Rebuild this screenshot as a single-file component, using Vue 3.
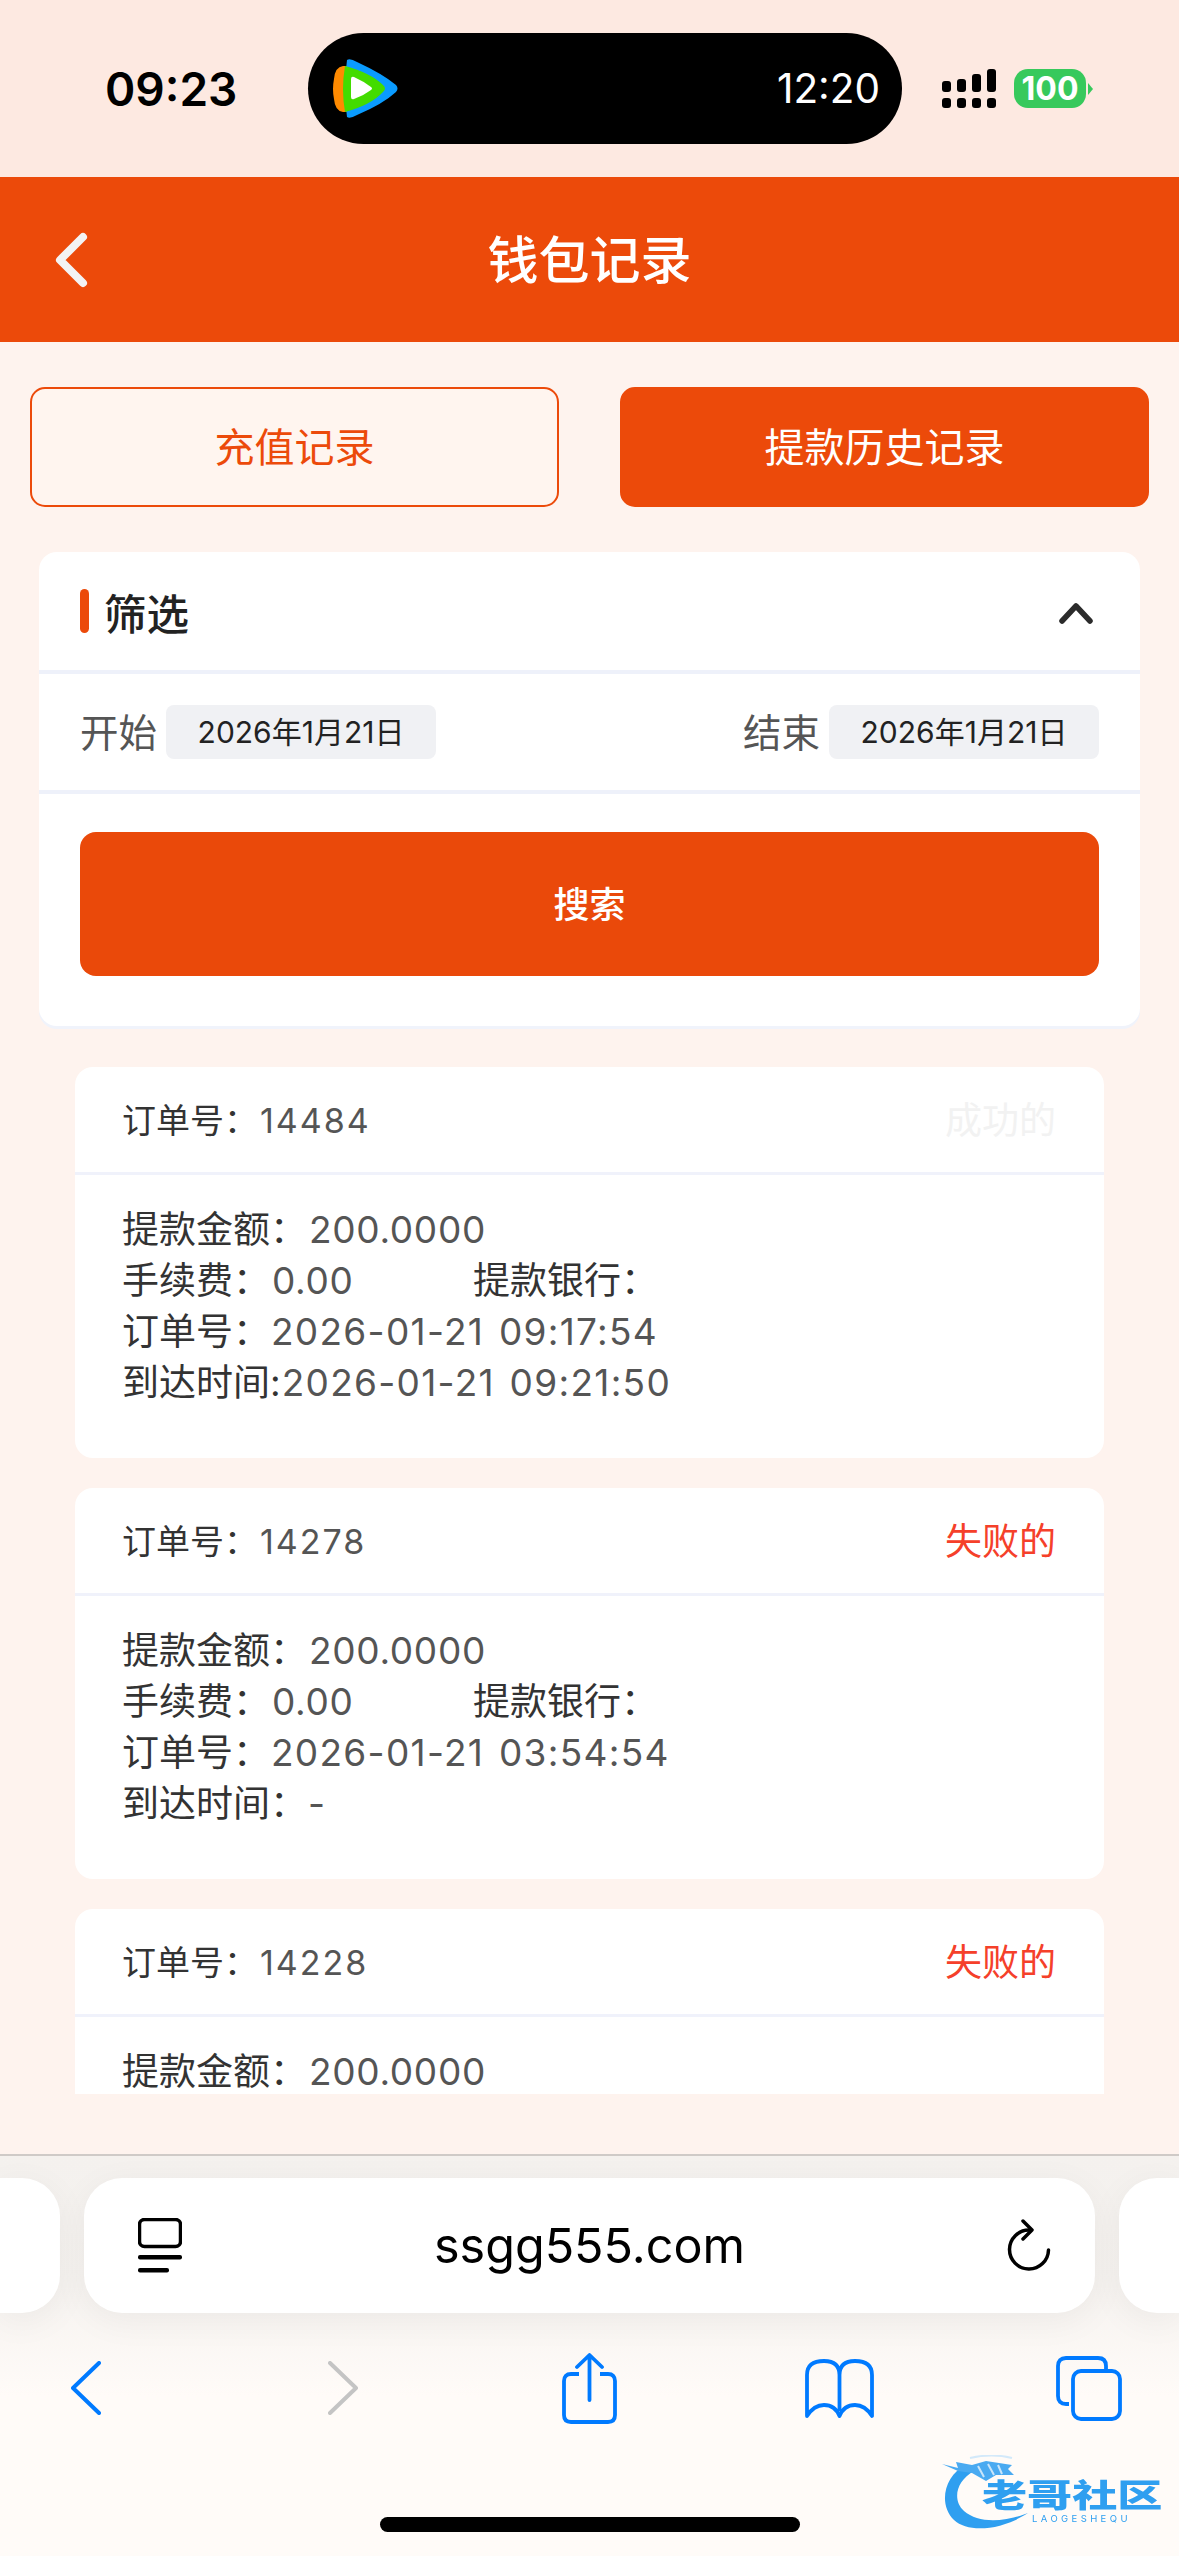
<template>
  <div class="screen">
    <header class="status">
      <span class="clock">09:23</span>
      <div class="island">
        <svg class="tv-logo" width="66" height="60" viewBox="0 0 66 60">
          <path d="M10 7Q2 8 1 20Q-1 30 1 40Q2 52 10 53L20 53L20 7Z" fill="#ff8a00" />
          <path d="M14 1Q17-1 24 3Q50 15 63 26Q66 29.5 63 33Q50 45 24 56Q17 60 14 58Q10 30 14 1Z" fill="#0a9bff" />
          <path d="M12 7Q38 14 50 26Q54 29.5 50 33Q38 46 12 53Q8 30 12 7Z" fill="#43dc00" />
          <path d="M18 20Q18 17 21 18Q30 22 38 28Q40 29.5 38 31Q30 37 21 40Q18 41 18 38Z" fill="#fff" />
        </svg>
        <span class="island-time">12:20</span>
      </div>
      <div class="signal">
        <div v-for="h in signalBars" :key="h" class="signal-col">
          <i :style="{ height: h + 'px' }"></i>
          <i class="dot"></i>
        </div>
      </div>
      <div class="battery">
        <span class="battery-body">100</span>
        <span class="battery-nub"></span>
      </div>
    </header>

    <nav class="topbar">
      <svg class="back" width="36" height="56" viewBox="0 0 36 56">
        <path d="M29 5L6 28L29 51" fill="none" stroke="#f3f3f3" stroke-width="8" stroke-linecap="round" stroke-linejoin="round" />
      </svg>
      <h1 class="title">钱包记录</h1>
    </nav>

    <main class="content">
      <div class="tabs">
        <button class="tab">充值记录</button>
        <button class="tab active">提款历史记录</button>
      </div>

      <section class="filter">
        <div class="filter-head">
          <span class="marker"></span>
          <span class="filter-title">筛选</span>
          <svg class="caret" width="34" height="22" viewBox="0 0 34 22">
            <path d="M3 19L17 4L31 19" fill="none" stroke="#2b2b2b" stroke-width="5.5" stroke-linecap="round" stroke-linejoin="round" />
          </svg>
        </div>
        <div class="filter-dates">
          <span class="date-label">开始</span>
          <span class="date-pill">2026年1月21日</span>
          <span class="date-label push">结束</span>
          <span class="date-pill">2026年1月21日</span>
        </div>
        <button class="search">搜索</button>
      </section>

      <div class="records">
        <article v-for="rec in records" :key="rec.id" class="record">
          <div class="record-head">
            <span class="order"><b>订单号：</b><span class="order-id">{{ rec.id }}</span></span>
            <span :class="['state', rec.ok ? 'ok' : 'fail']">{{ rec.ok ? '成功的' : '失败的' }}</span>
          </div>
          <div class="record-body">
            <p><b>提款金额：</b><span class="amount">200.0000</span></p>
            <template v-if="rec.created">
              <p><span class="fee"><b>手续费：</b><span class="amount">0.00</span></span><b>提款银行：</b></p>
              <p><b>订单号：</b><span class="stamp">{{ rec.created }}</span></p>
              <p><b>{{ rec.arrivedLabel }}</b><span class="stamp">{{ rec.arrived }}</span></p>
            </template>
          </div>
        </article>
      </div>
    </main>

    <footer class="browser">
      <div class="url-row">
        <div class="peek left"></div>
        <div class="url-bar">
          <svg width="44" height="56" viewBox="0 0 44 56">
            <rect x="1.5" y="1.5" width="41" height="27" rx="5" fill="none" stroke="#000" stroke-width="3.5" />
            <rect x="0" y="37" width="44" height="4.5" rx="2" fill="#000" />
            <rect x="0" y="50" width="31" height="4.5" rx="2" fill="#000" />
          </svg>
          <span class="url">ssgg555.com</span>
          <svg width="44" height="54" viewBox="0 0 44 54">
            <path d="M22 11A19.5 19.5 0 1 0 41.5 31" fill="none" stroke="#000" stroke-width="3.5" stroke-linecap="round" />
            <path d="M16 2L25 11L16 20" fill="none" stroke="#000" stroke-width="3.5" stroke-linecap="round" stroke-linejoin="round" />
          </svg>
        </div>
        <div class="peek right"></div>
      </div>

      <div class="tools">
        <svg class="t-back" width="30" height="54" viewBox="0 0 30 54">
          <path d="M28 2L2 27L28 52" fill="none" stroke="#007aff" stroke-width="4" stroke-linecap="round" stroke-linejoin="round" />
        </svg>
        <svg class="t-forward" width="30" height="54" viewBox="0 0 30 54">
          <path d="M2 2L28 27L2 52" fill="none" stroke="#c4c4c4" stroke-width="4" stroke-linecap="round" stroke-linejoin="round" />
        </svg>
        <svg class="t-share" width="55" height="71" viewBox="0 0 55 71">
          <path d="M17 21H9Q2 21 2 28V62Q2 69 9 69H46Q53 69 53 62V28Q53 21 46 21H38" fill="none" stroke="#007aff" stroke-width="3.8" />
          <path d="M27.5 47V3M15 14L27.5 2L40 14" fill="none" stroke="#007aff" stroke-width="3.8" stroke-linecap="round" stroke-linejoin="round" />
        </svg>
        <svg class="t-book" width="69" height="59" viewBox="0 0 69 59">
          <path d="M34.5 52V16Q34.5 2 19 2Q2 2 2 16V57Q9 46 19 46Q30 46 34.5 57Q39 46 50 46Q60 46 67 57V16Q67 2 50 2Q34.5 2 34.5 16" fill="none" stroke="#007aff" stroke-width="3.8" stroke-linejoin="round" />
        </svg>
        <svg class="t-tabs" width="66" height="65" viewBox="0 0 66 65">
          <path d="M13 48H10Q2 48 2 40V10Q2 2 10 2H42Q50 2 50 10V13" fill="none" stroke="#007aff" stroke-width="3.8" />
          <rect x="17" y="15" width="47" height="48" rx="8" fill="none" stroke="#007aff" stroke-width="3.8" />
        </svg>
      </div>

      <div class="home-bar"></div>
    </footer>

    <div class="watermark">
      <svg class="dragon" width="90" height="78" viewBox="0 0 90 78">
        <path d="M24 10C2 20-4 50 12 65C26 78 58 76 86 58C60 68 36 68 22 56C10 45 14 26 32 16Z" fill="#2f9ff0" />
        <path d="M0 9L16 13L14 7L30 10L44 6L70 10L66 14L72 20L54 20L44 26L30 18L16 16Z" fill="#4aaaf1" />
        <path d="M36 11L42 22M46 9L52 20M56 10L60 19" stroke="#fff" stroke-width="2" opacity="0.7" />
        <path d="M28 3Q50-2 70 3" fill="none" stroke="#d3e9fa" stroke-width="2" />
      </svg>
      <span class="wm-name">老哥社区</span>
      <span class="wm-sub">LAOGESHEQU</span>
    </div>
  </div>
</template>

<script setup>
const signalBars = [11, 13, 18, 23];

const records = [
  {
    id: "14484",
    ok: true,
    created: "2026-01-21 09:17:54",
    arrivedLabel: "到达时间:",
    arrived: "2026-01-21 09:21:50",
  },
  {
    id: "14278",
    ok: false,
    created: "2026-01-21 03:54:54",
    arrivedLabel: "到达时间：",
    arrived: "-",
  },
  { id: "14228", ok: false },
];
</script>

<style>
html,
body {
  margin: 0;
  background: #fef3ee;
}
</style>

<style scoped>
.screen {
  position: relative;
  display: flex;
  flex-direction: column;
  width: 1179px;
  height: 2556px;
  overflow: hidden;
  background: #fef3ee;
  font-family: Inter, "Noto Sans CJK SC", sans-serif;
  color: #555;
}

/* status bar */
.status {
  display: flex;
  align-items: center;
  flex: none;
  height: 177px;
  padding-left: 105px;
  box-sizing: border-box;
  background: #fde9e1;
}
.clock {
  width: 203px;
  font-size: 46px;
  font-weight: 600;
  color: #000;
}
.island {
  display: flex;
  align-items: center;
  justify-content: space-between;
  width: 594px;
  height: 111px;
  padding: 0 22px 0 25px;
  box-sizing: border-box;
  border-radius: 56px;
  background: #000;
}
.tv-logo {
  margin-top: 1px;
}
.island-time {
  font-size: 40.5px;
  font-weight: 400;
  color: #fff;
}
.signal {
  display: flex;
  gap: 6px;
  margin-left: 40px;
}
.signal-col {
  display: flex;
  flex-direction: column;
  justify-content: flex-end;
  gap: 6px;
  width: 9px;
  height: 39px;
}
.signal-col i {
  display: block;
  border-radius: 3px;
  background: #000;
}
.signal-col i.dot {
  height: 10px;
}
.battery {
  display: flex;
  align-items: center;
  margin-left: 18px;
}
.battery-body {
  width: 72px;
  height: 39px;
  border-radius: 14px;
  background: #37c95c;
  color: #fff;
  font-size: 32px;
  font-weight: 700;
  line-height: 39px;
  text-align: center;
}
.battery-nub {
  width: 0;
  height: 0;
  margin-left: 2px;
  border-top: 6px solid transparent;
  border-bottom: 6px solid transparent;
  border-left: 5px solid #37c95c;
}

/* page header */
.topbar {
  position: relative;
  display: flex;
  align-items: center;
  justify-content: center;
  flex: none;
  height: 165px;
  background: #ec4a0a;
}
.back {
  position: absolute;
  left: 54px;
  top: 55px;
}
.title {
  margin: 0 0 5px;
  font-size: 51px;
  font-weight: 500;
  color: #fff;
}

/* scrolling part */
.content {
  flex: none;
  height: 1752px;
  overflow: hidden;
}
.tabs {
  display: flex;
  gap: 61px;
  padding: 45px 30px 0;
}
.tab {
  flex: 1;
  height: 120px;
  box-sizing: border-box;
  padding: 0 0 4px;
  border: 2px solid #ec4a0a;
  border-radius: 15px;
  background: #fff5ef;
  color: #ec4a0a;
  font-family: inherit;
  font-size: 40px;
}
.tab.active {
  background: #ec4a0a;
  color: #fff;
}

.filter {
  margin: 45px 39px 0;
  padding-bottom: 50px;
  border-radius: 18px;
  background: #fff;
  box-shadow: 0 3px 0 #f0f3fb;
}
.filter-head {
  display: flex;
  align-items: center;
  height: 118px;
  padding: 0 47px 0 41px;
  border-bottom: 4px solid #eef1fa;
}
.marker {
  width: 9px;
  height: 44px;
  border-radius: 5px;
  background: #ec4a0a;
}
.filter-title {
  margin-left: 15px;
  font-size: 42.5px;
  font-weight: 500;
  color: #222;
}
.caret {
  margin-top: 3px;
  margin-left: auto;
}
.filter-dates {
  display: flex;
  align-items: center;
  height: 116px;
  padding: 0 41px;
  border-bottom: 4px solid #eef1fa;
}
.date-label {
  margin-right: 9px;
  margin-bottom: 4px;
  font-size: 38.5px;
  color: #555;
}
.date-label.push {
  margin-left: auto;
}
.date-pill {
  width: 270px;
  height: 54px;
  border-radius: 8px;
  background: #f0f1f4;
  color: #222;
  font-size: 30px;
  line-height: 54px;
  text-align: center;
}
.search {
  display: block;
  width: 1019px;
  height: 144px;
  margin: 38px auto 0;
  padding: 0 0 4px;
  border: 0;
  border-radius: 16px;
  background: #ea490a;
  color: #fff;
  font-family: inherit;
  font-size: 36px;
  font-weight: 500;
}

.records {
  display: flex;
  flex-direction: column;
  gap: 30px;
  margin: 41px 75px 0;
}
.record {
  flex: none;
  height: 391px;
  border-radius: 18px;
  background: #fff;
}
.record b {
  font-weight: 400;
  color: #333;
}
.record-head {
  display: flex;
  align-items: center;
  justify-content: space-between;
  height: 102px;
  padding: 0 48px 3px 47px;
  border-bottom: 3px solid #f0f2fb;
}
.order {
  font-size: 34px;
}
.order-id {
  margin-left: 2px;
  letter-spacing: 2px;
}
.state {
  font-size: 37px;
}
.state.ok {
  color: #f2f2f2;
}
.state.fail {
  color: #f5402a;
}
.record-body {
  padding: 29px 48px 0 47px;
  font-size: 37px;
  line-height: 51px;
}
.record-body p {
  margin: 0;
  white-space: pre;
}
.amount {
  margin-left: 2px;
  letter-spacing: 0.7px;
}
.stamp {
  margin-left: 1px;
  letter-spacing: 1.3px;
  word-spacing: 3px;
}
.fee {
  display: inline-block;
  width: 351px;
}

/* safari toolbar */
.browser {
  flex: 1;
  margin-top: 60px;
  border-top: 2px solid #cfcac7;
  background: linear-gradient(#f4f1ee, #f6f3f0 130px, #fffbf8 240px);
}
.url-row {
  display: flex;
  gap: 24px;
  padding-top: 22px;
}
.peek,
.url-bar {
  height: 135px;
  background: #fff;
  box-shadow: 0 8px 36px rgba(0, 0, 0, 0.05);
}
.peek {
  flex: none;
  width: 60px;
}
.peek.left {
  border-radius: 0 38px 38px 0;
}
.peek.right {
  border-radius: 38px 0 0 38px;
}
.url-bar {
  display: flex;
  align-items: center;
  justify-content: space-between;
  flex: none;
  width: 1011px;
  padding: 0 44px 0 54px;
  box-sizing: border-box;
  border-radius: 38px;
}
.url {
  margin-right: 10px;
  font-size: 48.5px;
  color: #000;
}
.tools {
  display: flex;
  align-items: center;
  height: 100px;
  margin-top: 25px;
  padding-left: 71px;
}
.t-forward {
  margin-left: 227px;
}
.t-share {
  margin-left: 204px;
}
.t-book {
  margin-left: 188px;
}
.t-tabs {
  margin-left: 182px;
}
.home-bar {
  width: 420px;
  height: 15px;
  margin: 79px auto 0;
  border-radius: 8px;
  background: #000;
}

/* site watermark over the toolbar */
.watermark {
  position: absolute;
  left: 942px;
  top: 2455px;
  width: 225px;
  height: 78px;
  filter: blur(0.7px);
}
.dragon {
  position: absolute;
  left: 0;
  top: 0;
}
.wm-name {
  position: absolute;
  left: 40px;
  top: 26px;
  font-size: 32px;
  font-weight: 900;
  line-height: 30px;
  white-space: nowrap;
  color: #2f9ff0;
  transform: scaleX(1.41);
  transform-origin: left center;
}
.wm-sub {
  position: absolute;
  left: 90px;
  top: 58px;
  font-size: 9.5px;
  line-height: 11px;
  letter-spacing: 3.4px;
  white-space: nowrap;
  color: #2f9ff0;
}
</style>
